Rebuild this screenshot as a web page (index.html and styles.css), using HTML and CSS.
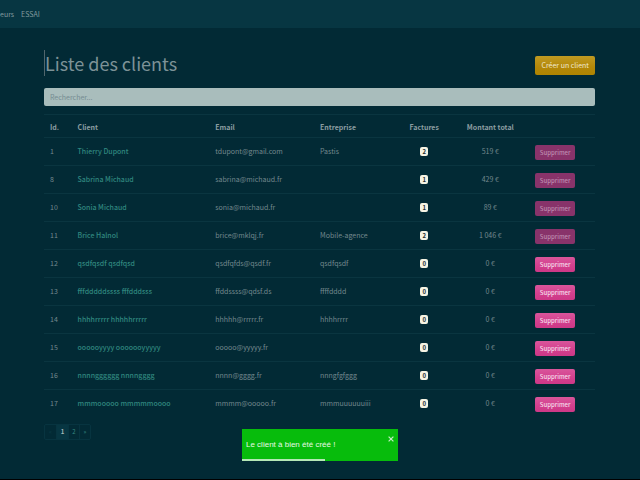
FILE: index.html
```html
<!DOCTYPE html>
<html lang="fr">
<head>
<meta charset="utf-8">
<title>Liste des clients</title>
<link rel="stylesheet" href="styles.css">
</head>
<body>
<nav class="navbar">
  <a class="nav-link" href="#">eurs</a>
  <a class="nav-link" href="#">ESSAI</a>
</nav>
<main class="container">
  <header class="page-header">
    <h1 class="page-title">Liste des clients</h1>
    <a class="btn btn-create" href="#">Créer un client</a>
  </header>
  <input class="search" type="text" placeholder="Rechercher..." aria-label="Rechercher">
  <table class="clients">
    <colgroup>
      <col class="col-id"><col class="col-client"><col class="col-email"><col class="col-company"><col class="col-count"><col class="col-total"><col class="col-action">
    </colgroup>
    <thead>
      <tr><th>Id.</th><th>Client</th><th>Email</th><th>Entreprise</th><th class="center">Factures</th><th class="center">Montant total</th><th></th></tr>
    </thead>
    <tbody>
      <tr><td>1</td><td><a href="#">Thierry Dupont</a></td><td>tdupont@gmail.com</td><td>Pastis</td><td class="center"><span class="badge">2</span></td><td class="center">519 €</td><td><button class="btn btn-delete" disabled>Supprimer</button></td></tr>
      <tr><td>8</td><td><a href="#">Sabrina Michaud</a></td><td>sabrina@michaud.fr</td><td></td><td class="center"><span class="badge">1</span></td><td class="center">429 €</td><td><button class="btn btn-delete" disabled>Supprimer</button></td></tr>
      <tr><td>10</td><td><a href="#">Sonia Michaud</a></td><td>sonia@michaud.fr</td><td></td><td class="center"><span class="badge">1</span></td><td class="center">89 €</td><td><button class="btn btn-delete" disabled>Supprimer</button></td></tr>
      <tr><td>11</td><td><a href="#">Brice Halnol</a></td><td>brice@mklqj.fr</td><td>Mobile-agence</td><td class="center"><span class="badge">2</span></td><td class="center">1 046 €</td><td><button class="btn btn-delete" disabled>Supprimer</button></td></tr>
      <tr><td>12</td><td><a href="#">qsdfqsdf qsdfqsd</a></td><td>qsdfqfds@qsdf.fr</td><td>qsdfqsdf</td><td class="center"><span class="badge">0</span></td><td class="center">0 €</td><td><button class="btn btn-delete">Supprimer</button></td></tr>
      <tr><td>13</td><td><a href="#">fffdddddssss fffdddsss</a></td><td>ffddssss@qdsf.ds</td><td>ffffdddd</td><td class="center"><span class="badge">0</span></td><td class="center">0 €</td><td><button class="btn btn-delete">Supprimer</button></td></tr>
      <tr><td>14</td><td><a href="#">hhhhrrrrr hhhhhrrrrr</a></td><td>hhhhh@rrrrr.fr</td><td>hhhhrrrr</td><td class="center"><span class="badge">0</span></td><td class="center">0 €</td><td><button class="btn btn-delete">Supprimer</button></td></tr>
      <tr><td>15</td><td><a href="#">oooooyyyy ooooooyyyyy</a></td><td>ooooo@yyyyy.fr</td><td></td><td class="center"><span class="badge">0</span></td><td class="center">0 €</td><td><button class="btn btn-delete">Supprimer</button></td></tr>
      <tr><td>16</td><td><a href="#">nnnngggggg nnnngggg</a></td><td>nnnn@gggg.fr</td><td>nnngfgfggg</td><td class="center"><span class="badge">0</span></td><td class="center">0 €</td><td><button class="btn btn-delete">Supprimer</button></td></tr>
      <tr><td>17</td><td><a href="#">mmmooooo mmmmmoooo</a></td><td>mmmm@ooooo.fr</td><td>mmmuuuuuuiii</td><td class="center"><span class="badge">0</span></td><td class="center">0 €</td><td><button class="btn btn-delete">Supprimer</button></td></tr>
    </tbody>
  </table>
  <nav class="pagination" aria-label="Pagination">
    <a class="page disabled" href="#">«</a>
    <a class="page active" href="#">1</a>
    <a class="page" href="#">2</a>
    <a class="page" href="#">»</a>
  </nav>
</main>
<div class="toast" role="alert">
  <span class="toast-text">Le client à bien été créé !</span>
  <button class="toast-close" aria-label="Fermer">
    <svg class="toast-icon" viewBox="0 0 6 6"><path d="M0.6 0.6 5.4 5.4M5.4 0.6 0.6 5.4" stroke="currentColor" stroke-width="1.2" fill="none"/></svg>
  </button>
  <div class="toast-progress"></div>
</div>
</body>
</html>
```
FILE: styles.css
```css
* {
  box-sizing: border-box;
}

body {
  margin: 0;
  min-height: 100vh;
  background: #022a35;
  border-bottom: 1px solid #000;
  color: #74898e;
  font-family: "Noto Sans CJK JP", "Noto Sans", sans-serif;
  font-size: 7px;
  line-height: 12px;
}

a {
  color: inherit;
  text-decoration: none;
}

.navbar {
  display: flex;
  align-items: center;
  gap: 7px;
  height: 28px;
  background: #073642;
  color: #839a9f;
}

.container {
  padding: 22px 45px 0 44px;
}

.page-header {
  display: flex;
  align-items: center;
  justify-content: space-between;
  margin-bottom: 12px;
}

.page-title {
  margin: 0;
  border-left: 1px solid #50666d;
  color: #7d9297;
  font-size: 18px;
  font-weight: 400;
  line-height: 26px;
}

.btn {
  display: block;
  border: 0;
  border-radius: 2px;
  font-family: inherit;
  font-size: 7px;
  white-space: nowrap;
}

.btn-create {
  margin-top: 4px;
  padding: 3px 6px;
  background: linear-gradient(#c09a22, #b38708 60%, #b08400);
  color: #f0ead2;
  line-height: 13px;
}

.btn-delete {
  padding: 0 5px;
  background: linear-gradient(#d9559b, #d33f8d 60%, #cd3887);
  color: #f5dcea;
  font-size: 6px;
  font-weight: 500;
  line-height: 15px;
}

.btn-delete:disabled {
  background: #88336a;
  color: #bd8baf;
}

.search {
  display: block;
  width: 100%;
  height: 18px;
  margin-bottom: 8px;
  padding: 0 6px;
  border: 0;
  border-radius: 2px;
  background: #a9bdbc;
  color: #40565c;
  font-family: inherit;
  font-size: 7px;
}

.search::placeholder {
  color: #758c92;
  opacity: 1;
}

.clients {
  width: 100%;
  border-spacing: 0;
  table-layout: fixed;
}

.col-id { width: 5%; }
.col-client { width: 25%; }
.col-email { width: 19%; }
.col-company { width: 15%; }
.col-count { width: 10%; }
.col-total { width: 14%; }
.col-action { width: 12%; }

.clients th,
.clients td {
  padding: 7px 6px 5px;
  border-top: 1px solid #0a3540;
  text-align: left;
  vertical-align: top;
  white-space: nowrap;
}

.clients th {
  padding: 6px 6px 4px;
  color: #8b9da1;
  font-weight: 700;
}

.clients .center {
  text-align: center;
}

.clients td a {
  color: #30877f;
  font-weight: 500;
}

.badge {
  display: inline-block;
  padding: 0 2px;
  border-radius: 2px;
  background: #f5f3e3;
  color: #222c2e;
  font-size: 6px;
  font-weight: 700;
  line-height: 9px;
}

.pagination {
  display: inline-flex;
  margin-top: 7px;
  border: 1px solid #073440;
  border-radius: 2px;
}

.page {
  width: 11px;
  color: #35857f;
  font-size: 6px;
  line-height: 14px;
  text-align: center;
}

.page + .page {
  border-left: 1px solid #073440;
}

.page.active {
  width: 12px;
  background: #073642;
  color: #a6b8ba;
  font-weight: 700;
}

.page.disabled {
  color: #0b3c47;
}

.toast {
  position: fixed;
  bottom: 19px;
  left: 50%;
  display: flex;
  align-items: center;
  width: 156px;
  height: 32px;
  margin-left: -78px;
  padding: 0 4px;
  background: #07bc0c;
  color: #e6f8e4;
  font-family: "Liberation Sans", Arial, sans-serif;
  font-size: 8px;
}

.toast-text {
  flex: 1;
}

.toast-close {
  align-self: flex-start;
  margin-top: 7px;
  padding: 0;
  border: 0;
  background: none;
  color: #c4f0c4;
}

.toast-icon {
  display: block;
  width: 6px;
  height: 6px;
}

.toast-progress {
  position: absolute;
  bottom: 0;
  left: 0;
  width: 53%;
  height: 2px;
  background: #b5e8b6;
}
```
